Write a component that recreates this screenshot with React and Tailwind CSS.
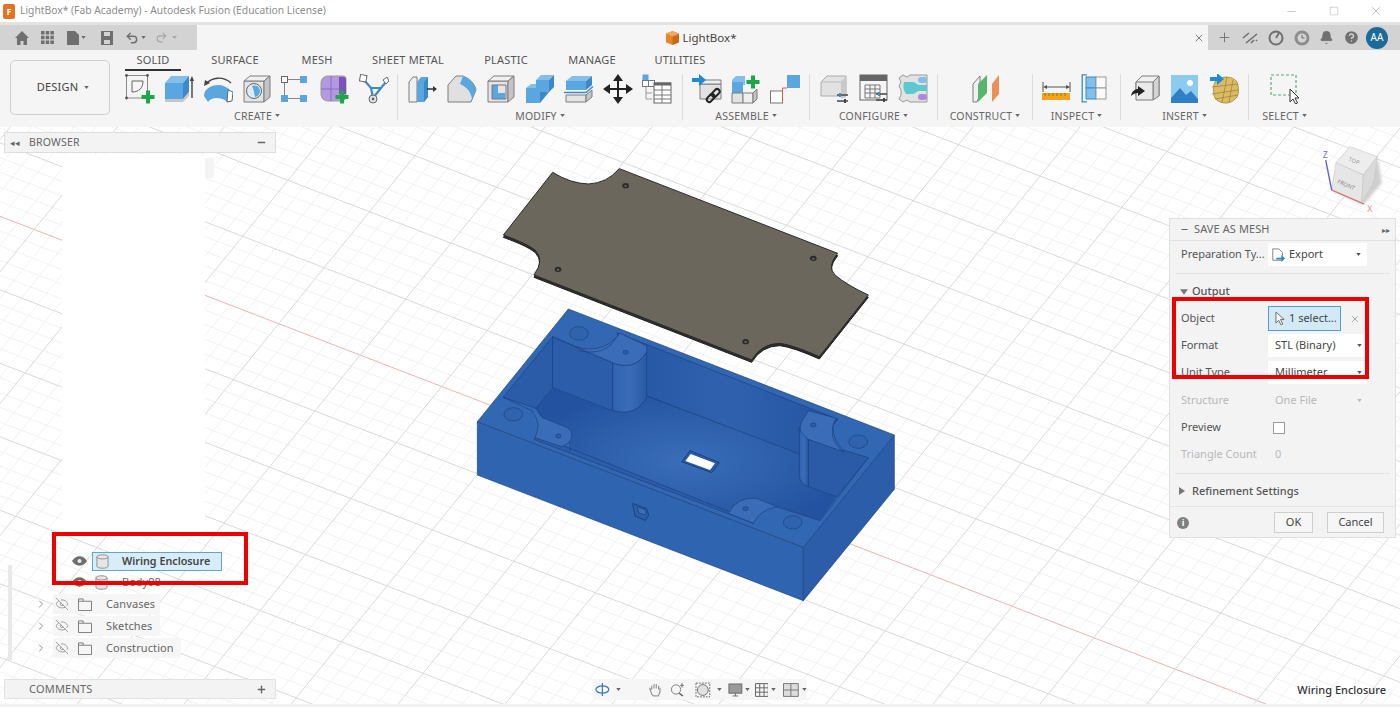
import { Undo2, Redo2, Plus, X, Minus, Square, ChevronRight, EyeOff, Bell, HelpCircle } from 'lucide-react';

const font = { fontFamily: '"Noto Sans", sans-serif' };

const Ico = ({ children }) => (
    <svg viewBox="0 0 30 30" className="h-[30px] w-[30px] shrink-0">{children}</svg>
);

const BLUE = '#5aa7e0';
const BLUE_D = '#3a89c9';
const BLUE_L = '#84bfea';
const EDGE = '#7d7d7d';
const GREEN = '#1ea64a';

const GreenPlus = ({ x = 23, y = 23 }) => (
    <path d={`M${x - 2} ${y - 6.5}h4v4.5h4.5v4h-4.5v4.5h-4v-4.5h-4.5v-4h4.5z`} fill={GREEN} />
);

const Sliders = ({ x = 18, y = 19 }) => (
    <g stroke="#444" strokeWidth="1.4">
        <path d={`M${x} ${y}h11M${x} ${y + 6}h11`} />
        <path d={`M${x + 3} ${y - 2}v4`} stroke={BLUE_D} strokeWidth="2" />
        <path d={`M${x + 8} ${y + 4}v4`} strokeWidth="2" />
    </g>
);

const BlueArrow = ({ x = 0, y = 0 }) => (
    <path d={`M${x} ${y + 3}h7v-4l7 6-7 6v-4h-7z`} fill="#1f8ad6" />
);

const Cube = ({ fill = '#e4e4e4', side = '#c4c4c4', top = '#f0f0f0' }) => (
    <g stroke={EDGE} strokeWidth="1" strokeLinejoin="round">
        <path d="M2 7h20v21H2z" fill={fill} />
        <path d="M2 7l6-5h20l-6 5z" fill={top} />
        <path d="M22 7l6-5v21l-6 5z" fill={side} />
    </g>
);

const createIcons = [
    <Ico key="sketch">
        <rect x="1.5" y="1.5" width="21" height="22.5" fill="none" stroke="#8a8a8a" />
        {[[1.5, 1.5], [22.5, 1.5], [1.5, 24], [22.5, 24]].map(([cx, cy]) => (
            <circle key={`${cx}${cy}`} cx={cx} cy={cy} r="1.4" fill="#555" />
        ))}
        <path d="M7 7h11M7 7v11M18 7c0 7-4 11-11 11" fill="none" stroke="#666" />
        <GreenPlus />
    </Ico>,
    <Ico key="extrude">
        <path d="M1 9h18v16H1z" fill={BLUE} />
        <path d="M1 9l6-7h18l-6 7z" fill={BLUE_L} />
        <path d="M19 9l6-7v16l-6 7z" fill={BLUE_D} />
        <path d="M1 25h18l6-7v4l-6 6H1z" fill="#c6c6c6" />
        <path d="M28 24V5" stroke="#444" strokeWidth="1.4" />
        <path d="M25.7 7L28 2l2 5z" fill="#444" />
    </Ico>,
    <Ico key="revolve">
        <path d="M1 22C1 15 8 11 15 11c5 0 9 2 12 5l-3 12c-3-3-6-4-10-4s-7 1-9 4z" fill={BLUE} />
        <path d="M25 16l5 2-1 9-5 1z" fill="#fff" stroke="#666" />
        <path d="M3 10C9 3 20 2 28 9" fill="none" stroke="#444" strokeWidth="1.3" />
        <path d="M1 12l1-6 5 3z" fill="#444" />
    </Ico>,
    <Ico key="hole">
        <Cube />
        <circle cx="12" cy="17" r="7.5" fill="#dcebf6" stroke="#666" />
        <path d="M10 12c5-2 8 2 8 5 0 3-3 6-5 6-1-4-1-8-3-11z" fill={BLUE} />
    </Ico>,
    <Ico key="pattern">
        <rect x="0.5" y="2.5" width="6" height="6" fill="#fff" stroke="#666" />
        <rect x="19" y="2" width="7" height="7" fill={BLUE} />
        <rect x="0" y="21" width="7" height="7" fill={BLUE} />
        <rect x="19" y="21" width="7" height="7" fill={BLUE} />
        <path d="M7 5.5h12M3.5 9v12M7 24.5h12" stroke="#888" />
    </Ico>,
    <Ico key="form">
        <path d="M1 9c0-4 3-7 7-7h15c2 0 3 1 3 3v17c0 3-2 5-5 5H8c-4 0-7-3-7-7z" fill="#b39ae0" stroke="#9a9a9a" />
        <path d="M1 15h20M11 2v25" stroke="#8a6fc0" />
        <path d="M19 3h4c2 0 3 1 3 3v14h-7z" fill="#7a52b8" />
        <GreenPlus x={22} y={23} />
    </Ico>,
    <Ico key="derive">
        <path d="M5 6l7 8h10l5-6M12 14l2 10M22 14l-8 10" fill="none" stroke={BLUE_D} strokeWidth="2.2" />
        <rect x="1" y="1" width="6.5" height="6.5" fill="#fff" stroke="#666" transform="rotate(10 4 4)" />
        <path d="M24 6l4-3 2 4-3 3z" fill="#fff" stroke="#666" />
        <circle cx="14" cy="25" r="4" fill="#e4e4e4" stroke="#666" />
        <circle cx="14" cy="25" r="1.4" fill="#666" />
    </Ico>,
];

const modifyIcons = [
    <Ico key="press">
        <path d="M1 28V8l4-5h4v25z" fill="#f0f0f0" stroke={EDGE} />
        <path d="M9 28V8l4-5h7v20l-4 5z" fill={BLUE} />
        <path d="M16 8l4-5v20l-4 5z" fill={BLUE_D} />
        <path d="M19 15h7" stroke="#333" strokeWidth="1.5" />
        <path d="M25 12l4 3-4 3z" fill="#333" />
    </Ico>,
    <Ico key="fillet">
        <path d="M1 28V11l8-9h7c7 3 12 8 13 14l-5 12z" fill="#e0e0e0" stroke={EDGE} />
        <path d="M16 2c7 2 12 8 13 14l-4 9c-1-7-5-12-12-15z" fill={BLUE} />
    </Ico>,
    <Ico key="shell">
        <Cube />
        <path d="M6 11h6v8h7v6H6z" fill={BLUE} />
        <path d="M6 11h14v14H6z" fill="none" stroke="#777" />
    </Ico>,
    <Ico key="combine">
        <path d="M1 14l5-4h12v8H1z" fill={BLUE_L} />
        <path d="M1 14h14v15H1z" fill={BLUE} />
        <path d="M11 6l5-5h13l-5 5z" fill={BLUE_L} />
        <path d="M11 6h13v12H11z" fill={BLUE} />
        <path d="M24 6l5-5v12l-5 5zM15 18h9l-9 11z" fill={BLUE_D} />
    </Ico>,
    <Ico key="split">
        <path d="M2 7l6-5h20l-6 5z" fill={BLUE_L} />
        <path d="M2 7h20v9H2z" fill={BLUE} />
        <path d="M22 7l6-5v9l-6 5z" fill={BLUE_D} />
        <path d="M0 18.5h22l7-6" fill="none" stroke={BLUE_D} strokeWidth="1.5" />
        <path d="M2 21h20v7H2z" fill="#e4e4e4" stroke={EDGE} />
        <path d="M22 21l6-5v7l-6 5z" fill="#c4c4c4" stroke={EDGE} />
    </Ico>,
    <Ico key="move">
        <path d="M15 3v24M3 15h24" stroke="#222" strokeWidth="2" />
        <path d="M15 0l5 7H10zM15 30l-5-7h10zM0 15l7-5v10zM30 15l-7 5V10z" fill="#222" />
    </Ico>,
    <Ico key="params">
        <rect x="0.5" y="0.5" width="6" height="6" fill={BLUE} />
        <rect x="0.5" y="6.5" width="6" height="6" fill="#fff" stroke="#777" />
        <rect x="6.5" y="6.5" width="6" height="6" fill="#fff" stroke="#777" />
        <path d="M4 13v12h6M4 19h6" stroke="#999" fill="none" />
        <rect x="12" y="9" width="17" height="20" fill="#fff" stroke="#666" />
        <path d="M12 10h17" stroke="#666" strokeWidth="3" />
        <path d="M12 16h17M12 21h17M12 25h17M20 11v18" stroke="#777" />
    </Ico>,
];

const assembleIcons = [
    <Ico key="joint">
        <path d="M8 10h21v15H8z" fill="#e2e2e2" stroke={EDGE} />
        <path d="M8 10l4-4h17v4z" fill="#f0f0f0" stroke={EDGE} />
        <BlueArrow x={0} y={1} />
        <g fill="none" stroke="#222" strokeWidth="2">
            <rect x="14" y="22" width="9" height="5" rx="2.5" transform="rotate(-45 18 24)" />
            <rect x="19" y="17" width="9" height="5" rx="2.5" transform="rotate(-45 23 19)" />
        </g>
    </Ico>,
    <Ico key="component">
        <path d="M1 6l4-4h9v9H1z" fill={BLUE_L} />
        <path d="M1 8h11v11H1z" fill={BLUE} />
        <path d="M1 19h11v10H1z" fill="#e2e2e2" stroke={EDGE} />
        <path d="M12 19h10v10H12z" fill="#efefef" stroke={EDGE} />
        <path d="M22 19l4-4v10l-4 4z" fill="#c4c4c4" stroke={EDGE} />
        <GreenPlus x={22} y={8} />
    </Ico>,
    <Ico key="built">
        <rect x="17" y="1" width="13" height="13" fill={BLUE} />
        <rect x="0.5" y="17" width="12" height="12" fill="#fff" stroke="#777" />
        <path d="M12.5 14v15M12.5 14H17" fill="none" stroke="#e05a4a" />
    </Ico>,
];

const configureIcons = [
    <Ico key="cfg">
        <path d="M1 8l6-6h19v20H1z" fill="#e2e2e2" stroke="#aaa" />
        <path d="M21 8l5-6v21l-5 2z" fill="#c8c8c8" />
        <path d="M1 8h20" stroke="#bbb" />
        <Sliders x={17} y={21} />
    </Ico>,
    <Ico key="cfgtable">
        <rect x="1" y="1" width="27" height="25" fill="#f6f6f6" stroke="#666" />
        <rect x="1" y="1" width="27" height="6" fill="#666" />
        <path d="M6 11h15v13H6zM6 15h15M6 19h15M11 11v13M16 11v13" fill="none" stroke="#777" />
        <Sliders x={17} y={20} />
    </Ico>,
    <Ico key="cfgflow">
        <path d="M1 4l4-3 4 2 3-2h17v27H12l-3-2-4 2-4-3 2-4v-5l-2-4 2-4z" fill="#e2e2e2" stroke="#999" />
        <path d="M6 8h9c3 0 3 3 7 3h7v6h-8c-3 0-3 3-7 3H8c-3-4-3-8-2-12z" fill="#5cc8d0" />
        <rect x="20" y="3" width="9" height="6" rx="3" fill={BLUE_L} />
        <rect x="20" y="20" width="9" height="6" rx="3" fill="#a98bdc" />
    </Ico>,
];

const constructIcons = [
    <Ico key="planes">
        <path d="M3 28V10l7-8v18l-3 8z" fill="#f0f0f0" stroke={EDGE} />
        <path d="M8 28V10l9-9v18z" fill="#58b56e" />
        <path d="M22 28V10l7-9v19z" fill="#e89058" />
    </Ico>,
];

const inspectIcons = [
    <Ico key="measure">
        <path d="M1 8v10M28 8v10M3 13h24" stroke="#555" />
        <path d="M1 13l4-2v4zM28 13l-4-2v4z" fill="#555" />
        <rect x="0" y="19" width="28" height="7" fill="#f2a31f" />
        <path d="M3 19v3M7 19v3M11 19v3M15 19v3M19 19v3M23 19v3" stroke="#a86e08" />
    </Ico>,
    <Ico key="section">
        <rect x="5" y="3" width="10" height="11" fill={BLUE_L} stroke={BLUE_D} />
        <rect x="5" y="14" width="10" height="11" fill={BLUE_L} stroke={BLUE_D} />
        <rect x="15" y="3" width="10" height="11" fill="#fafafa" stroke="#999" />
        <rect x="15" y="14" width="10" height="11" fill="#fafafa" stroke="#999" />
        <path d="M6 0.8H1.2v27H6" fill="none" stroke={BLUE_D} strokeWidth="1.3" />
    </Ico>,
];

const insertIcons = [
    <Ico key="derivein">
        <path d="M5 8l6-6h17v20H5z" fill="#f0f0f0" stroke={EDGE} />
        <path d="M22 8l6-6v20l-6 4z" fill="#d4d4d4" stroke={EDGE} />
        <path d="M5 26V8h17v18z" fill="#eaeaea" stroke={EDGE} />
        <path d="M0 22c1-5 4-7 7-7v-3l7 5-7 5v-3c-3 0-5 1-7 3z" fill="#222" />
    </Ico>,
    <Ico key="canvas">
        <rect x="1" y="1" width="27" height="28" fill="#8ccbf0" />
        <circle cx="20" cy="9" r="3" fill="#fff" />
        <path d="M1 24l9-10 6 7 5-4 7 8v4H1z" fill="#2f80c4" />
    </Ico>,
    <Ico key="mesh">
        <path d="M6 8c3-3 7-5 11-5 5 0 9 2 11 5 2 4 2 12 0 15-3 4-7 6-11 6-5 0-9-2-11-5-2-5-2-12 0-16z" fill="#dcbb68" stroke="#b4953f" />
        <path d="M3 13l26-3M3 20l26-4M6 25l23-4M18 3l-5 26M24 6l-4 22" fill="none" stroke="#a3852f" strokeWidth="0.8" />
        <BlueArrow x={1} y={0} />
    </Ico>,
];

const selectIcons = [
    <Ico key="select">
        <rect x="1" y="1" width="25" height="20" fill="none" stroke="#55b07a" strokeWidth="1.2" strokeDasharray="3 2" />
        <path d="M20 15v13l3-3 2.5 5 2-1-2.5-5h4z" fill="#fff" stroke="#333" strokeWidth="1" />
    </Ico>,
];

const tabs = [
    ['SOLID', 'w-[56px]'],
    ['SURFACE', 'w-[108px]'],
    ['MESH', 'w-[56px]'],
    ['SHEET METAL', 'w-[126px]'],
    ['PLASTIC', 'w-[70px]'],
    ['MANAGE', 'w-[102px]'],
    ['UTILITIES', 'w-[74px]'],
];

const groups = [
    { label: 'CREATE', width: 'w-[281px]', icons: createIcons },
    { label: 'MODIFY', width: 'w-[285px]', icons: modifyIcons },
    { label: 'ASSEMBLE', width: 'w-[127px]', icons: assembleIcons },
    { label: 'CONFIGURE', width: 'w-[128px]', icons: configureIcons },
    { label: 'CONSTRUCT', width: 'w-[95px]', icons: constructIcons },
    { label: 'INSPECT', width: 'w-[88px]', icons: inspectIcons },
    { label: 'INSERT', width: 'w-[128px]', icons: insertIcons },
    { label: 'SELECT', width: 'w-[71px]', icons: selectIcons, last: true },
];

const Caret = ({ className = '' }) => (
    <svg viewBox="0 0 6 4" className={`h-[3px] w-[5px] ${className}`}>
        <path d="M0 0h6L3 4z" fill="currentColor" />
    </svg>
);

function QuickBar() {
    return (
        <div className="flex h-[25px] w-[197px] items-center bg-[#d3d3d3] text-[#6f6f6f]">
            <svg viewBox="0 0 14 14" className="ml-[15px] h-[14px] w-[14px]">
                <path d="M7 0l7 7h-2v7H8.500v-4h-3v4H2V7H0z" fill="currentColor" />
            </svg>
            <svg viewBox="0 0 13 13" className="ml-[12px] h-[13px] w-[13px]">
                <path d="M0 0h3.500v3.500H0zM4.700 0h3.500v3.500H4.700zM9.400 0h3.500v3.500H9.400zM0 4.700h3.500v3.500H0zM4.700 4.700h3.500v3.500H4.700zM9.400 4.700h3.500v3.500H9.400zM0 9.400h3.500v3.500H0zM4.700 9.400h3.500v3.500H4.700zM9.400 9.400h3.500v3.500H9.400z" fill="currentColor" />
            </svg>
            <svg viewBox="0 0 12 14" className="ml-[13px] h-[14px] w-[12px]">
                <path d="M0 0h8l4 4v10H0z" fill="currentColor" />
            </svg>
            <Caret className="ml-[2px]" />
            <svg viewBox="0 0 12 14" className="ml-[15px] h-[14px] w-[12px]">
                <path d="M0 0h12v14H0zM3 1v4h6V1zM3 9v4h6V9z" fill="currentColor" fillRule="evenodd" />
            </svg>
            <Undo2 size={14} strokeWidth={2.5} className="ml-[12px]" />
            <Caret className="ml-[2px]" />
            <Redo2 size={13} strokeWidth={2} className="ml-[9px] text-[#a5a5a5]" />
            <Caret className="ml-[4px] text-[#a5a5a5]" />
        </div>
    );
}

function RightIcons() {
    return (
        <div className="flex h-[25px] flex-1 items-center bg-[#d3d3d3] pl-[9px] text-[#707070]">
            <Plus size={15} strokeWidth={1.5} />
            <svg viewBox="0 0 16 14" className="ml-[10px] h-[14px] w-[16px]">
                <path d="M1 7l6-5M4 12l11-9M9 12l3-3M14 10l1-1" stroke="currentColor" strokeWidth="1.6" fill="none" />
            </svg>
            <svg viewBox="0 0 16 16" className="ml-[10px] h-[16px] w-[16px]">
                <circle cx="8" cy="8" r="6.500" fill="none" stroke="currentColor" strokeWidth="2" />
                <path d="M8 8l3-5" stroke="currentColor" strokeWidth="1.800" />
            </svg>
            <svg viewBox="0 0 16 16" className="ml-[10px] h-[16px] w-[16px]">
                <circle cx="8" cy="8" r="7.500" fill="#8d8d8d" />
                <circle cx="8" cy="8" r="4.500" fill="#d3d3d3" />
                <path d="M8 5v3h2.500" stroke="#666" fill="none" />
            </svg>
            <Bell size={15} fill="currentColor" strokeWidth={1} className="ml-[9px]" />
            <HelpCircle size={17} fill="currentColor" stroke="#d3d3d3" strokeWidth={2} className="ml-[9px]" />
            <div className="ml-[6px] flex h-[22px] w-[22px] items-center justify-center rounded-full bg-[#1b6a97] text-[10px] text-white">AA</div>
        </div>
    );
}

function Toolbar() {
    return (
        <div className="flex h-[77px] shrink-0 bg-[#f5f5f5] pl-[10px]">
            <div className="mt-[10px] flex h-[55px] w-[100px] items-center justify-center gap-[6px] rounded-[5px] border border-[#d0d0d0] bg-[#f5f5f5] pl-[6px] text-[11px] tracking-[0.2px] text-[#444]">
                DESIGN <Caret className="text-[#666]" />
            </div>
            <div className="ml-[7px] flex flex-col">
                <div className="ml-[8px] flex h-[20px] items-end text-[11px] tracking-[0.2px] text-[#555]">
                    {tabs.map(([name, width], i) => (
                        <div key={name} className={`${width} relative h-[20px] text-center leading-[20px]`}>
                            {name}
                            {i === 0 && <div className="absolute inset-x-0 -bottom-[1px] h-[2px] bg-[#333]" />}
                        </div>
                    ))}
                </div>
                <div className="mt-[4px] flex">
                    {groups.map(g => (
                        <div key={g.label} className={`${g.width} flex h-[46px] flex-col items-center ${g.last ? '' : 'border-r border-[#dcdcdc]'}`}>
                            <div className="flex gap-[9px]">{g.icons}</div>
                            <div className="mt-[6px] flex items-center gap-[3px] text-[10.500px] leading-[13px] tracking-[0.2px] text-[#666]">
                                {g.label} <Caret className="mb-[3px] text-[#666]" />
                            </div>
                        </div>
                    ))}
                </div>
            </div>
        </div>
    );
}

// grid lattice measured off the reference, origin sits on the red axis
const O = [278.7, 323.7];
const U = [81.5, 31.4];
const V = [45.4, -56];

function GridLines() {
    const lines = [];
    for (let j = -60; j <= 60; j++) {
        const ox = O[0] + (V[0] * j) / 5;
        const oy = O[1] + (V[1] * j) / 5;
        lines.push({ key: `a${j}`, x1: ox - U[0] * 30, y1: oy - U[1] * 30, x2: ox + U[0] * 30, y2: oy + U[1] * 30, major: j % 5 === 0, red: j === 0 });
    }
    for (let i = -80; i <= 120; i++) {
        const ox = O[0] + (U[0] * i) / 5;
        const oy = O[1] + (U[1] * i) / 5;
        lines.push({ key: `b${i}`, x1: ox - V[0] * 30, y1: oy - V[1] * 30, x2: ox + V[0] * 30, y2: oy + V[1] * 30, major: i % 5 === 0 });
    }
    const sorted = [...lines].sort((a, b) => Number(a.major) - Number(b.major));
    return sorted.map(({ key, major, red, ...l }) => (
        <line key={key} {...l} stroke={red ? '#f1b2b2' : major ? '#d9d9d9' : '#f2f2f2'} strokeWidth="1" />
    ));
}

const LINE = '#1c3f7c';

function Model() {
    const plate = 'M278 37Q330 70 385 72Q440 70 478 26L1133 280Q1100 320 1125 345Q1160 375 1225 405L1078 590Q1000 555 960 550Q905 550 875 600L222 345Q255 300 225 270Q200 250 130 225Z';
    return (
        <g transform="translate(460 160) scale(0.33333)">
            <defs>
                <radialGradient id="floor" cx="0.5" cy="0.55" r="0.55">
                    <stop offset="0" stopColor="#3a6eb9" />
                    <stop offset="1" stopColor="#2353a0" />
                </radialGradient>
                <linearGradient id="back" x1="0" y1="0" x2="1" y2="0">
                    <stop offset="0" stopColor="#2556a3" />
                    <stop offset="0.5" stopColor="#2f61ae" />
                    <stop offset="1" stopColor="#2454a0" />
                </linearGradient>
                <linearGradient id="round" x1="0" y1="0" x2="1" y2="0">
                    <stop offset="0" stopColor="#2f63b0" />
                    <stop offset="0.5" stopColor="#3a6cb8" />
                    <stop offset="1" stopColor="#2859a5" />
                </linearGradient>
            </defs>

            {/* lid plate */}
            <path d={plate} transform="translate(0 7)" fill="#2c2c2c" stroke="#1e1e1e" strokeWidth="3" />
            <path d={plate} fill="#6b675c" stroke="#2a2a2a" strokeWidth="3" />
            {[[497, 77], [1060, 295], [857, 545], [294, 328]].map(([cx, cy]) => (
                <g key={cx}>
                    <ellipse cx={cx} cy={cy} rx="10" ry="8" fill="#2a2a28" />
                    <ellipse cx={cx} cy={cy + 1} rx="4" ry="3" fill="#6b675c" />
                </g>
            ))}

            {/* box body */}
            <g stroke={LINE} strokeWidth="2" strokeLinejoin="round">
                <path d="M52 785L1030 1162V1322L52 945Z" fill="#2f65b0" />
                <path d="M1030 1162L1303 825V988L1030 1322Z" fill="#2c5da8" />
                <path d="M325 447L1303 825L1030 1162L52 785Z" fill="#3268b3" />

                {/* cavity walls and floor */}
                <path d="M470 518L1135 778L1020 885L560 708Z" fill="url(#back)" />
                <path d="M228 745L278 683L458 752L560 708L1020 880L1045 980L1130 1010L1080 1082L950 1040L890 1015L830 1030L805 1056L330 872L335 830L245 772Z" fill="url(#floor)" stroke="none" />
                <path d="M130 712L278 530V683L228 745Z" fill="#2b5ca8" />
                <path d="M560 708L1020 882" fill="none" />
                <path d="M228 745L245 772" fill="none" />
                <path d="M1225 893L1080 1082L950 1040" fill="none" />

                {/* thin front lip */}
                <path d="M232 826L805 1054L880 1090L222 838Z" fill="#2c5da8" />
                <path d="M330 832V874" fill="none" />

                {/* north pillar */}
                <path d="M278 530L458 608V752L278 683Z" fill="#2c5dab" />
                <path d="M458 608Q525 635 560 575V712Q530 770 458 752Z" fill="url(#round)" />
                <path d="M345 560Q430 585 480 520L560 557V575Q525 635 458 608Z" fill="#3a6cb8" />
                <path d="M278 530L345 560" fill="none" />
                <path d="M355 572Q440 590 470 530" fill="none" />

                {/* west tab */}
                <path d="M215 752Q248 790 225 833L305 860Q335 850 335 825Q335 810 320 802L245 772" fill="#3a6cb8" />
                <path d="M130 712L215 752" fill="none" />

                {/* east pillar */}
                <path d="M1045 838L1225 893L1130 1010L1045 980Z" fill="#2b5ba7" />
                <path d="M1018 800V950Q1020 970 1045 980V838Z" fill="url(#round)" />
                <path d="M1045 752L1130 775Q1100 810 1150 875L1045 838Q1010 815 1025 785Z" fill="#3a6cb8" />
                <path d="M1130 775Q1095 830 1152 878" fill="none" />

                {/* south tab */}
                <path d="M805 1060Q830 1010 890 1015L950 1040Q900 1050 880 1090Z" fill="#3a6cb8" />

                {/* screw holes */}
                {[[357, 520], [160, 763], [1195, 845], [998, 1087]].map(([cx, cy]) => (
                    <ellipse key={cx} cx={cx} cy={cy} rx="28" ry="20" fill="#3063ad" />
                ))}
                {[[497, 577], [295, 828], [1060, 795], [857, 1046]].map(([cx, cy]) => (
                    <ellipse key={cx} cx={cx} cy={cy} rx="8" ry="6" fill="#2c5da8" />
                ))}

                {/* slot and connector */}
                <path d="M665 905L690 872L778 908L755 938Z" fill="#2a5aa6" strokeWidth="3" />
                <path d="M676 903L692 882L765 910L750 930Z" fill="#fff" stroke="none" />
                <path d="M518 1030L560 1046L566 1066L556 1081L525 1068Z" fill="#2c5da8" strokeWidth="3" />
                <path d="M532 1040L556 1050L558 1066L536 1058Z" fill="#3c6fba" />
            </g>
        </g>
    );
}

function NavCube() {
    return (
        <g transform="translate(1160 140) scale(0.33333)">
            <defs>
                <filter id="soft"><feGaussianBlur stdDeviation="5" /></filter>
            </defs>
            <path d="M520 155L610 195L665 130L655 60Z" fill="#cfcfcf" filter="url(#soft)" />
            <path d="M528 68L570 20L652 50L610 105Z" fill="#ededed" stroke="#c8c8c8" strokeWidth="2" />
            <path d="M528 68L610 105L605 188L515 150Z" fill="#e6e6e6" stroke="#c8c8c8" strokeWidth="2" />
            <path d="M610 105L652 50L640 130L605 188Z" fill="#dadada" stroke="#c8c8c8" strokeWidth="2" />
            <text x="580" y="68" fontSize="17" fill="#999" transform="rotate(22 580 68)" textAnchor="middle" style={font}>TOP</text>
            <text x="556" y="140" fontSize="17" fill="#888" transform="rotate(24 556 140)" textAnchor="middle" style={font}>FRONT</text>
            <path d="M497 60L515 150" stroke="#5b5fd0" strokeWidth="4" />
            <path d="M515 150L612 192" stroke="#d96a6a" strokeWidth="4" />
            <text x="488" y="55" fontSize="26" fill="#6a6fe0" style={font}>Z</text>
            <text x="622" y="215" fontSize="26" fill="#e58a8a" style={font}>X</text>
        </g>
    );
}

const EyeSolid = () => (
    <svg viewBox="0 0 16 10" className="h-[10px] w-[15px] shrink-0">
        <path d="M0 5c2-3 5-5 8-5s6 2 8 5c-2 3-5 5-8 5S2 8 0 5z" fill="#6e6e6e" />
        <circle cx="8" cy="5" r="2.200" fill="#e8e8e8" />
    </svg>
);

const Cylinder = () => (
    <svg viewBox="0 0 14 16" className="h-[15px] w-[13px] shrink-0">
        <path d="M1 3c0-3 12-3 12 0v10c0 3-12 3-12 0z" fill="#e6e6e6" stroke="#8a8a8a" />
        <path d="M1 3c0 3 12 3 12 0" fill="none" stroke="#8a8a8a" />
    </svg>
);

const FolderIcon = () => (
    <svg viewBox="0 0 15 14" className="h-[13px] w-[14px] shrink-0">
        <path d="M.5 1h5v2.500h9v10H.5zM.5 3.500h5" fill="none" stroke="#777" />
    </svg>
);

function TreeFolder({ name, width }) {
    return (
        <div className="flex h-[22px] items-center">
            <ChevronRight size={12} strokeWidth={1.5} className="ml-[35px] shrink-0 text-[#666]" />
            <div className={`${width} ml-[6px] flex h-[20px] items-center rounded-[2px] bg-[#f6f6f6]`}>
                <EyeOff size={14} strokeWidth={1.3} className="ml-[2px] shrink-0 text-[#8a8a8a]" />
                <div className="ml-[9px]"><FolderIcon /></div>
                <span className="ml-[14px] text-[11px] tracking-[0.1px] text-[#666]">{name}</span>
            </div>
        </div>
    );
}

function Browser() {
    return (
        <>
            <div className="absolute left-[4px] top-[5px] flex h-[21px] w-[272px] items-center border border-[#dedede] bg-[#f3f3f3] text-[#666]">
                <span className="ml-[5px] w-[19px] text-[9px] leading-none">◂◂</span>
                <span className="text-[10.500px] tracking-[0.2px]">BROWSER</span>
                <Minus size={11} strokeWidth={3} className="ml-auto mr-[8px]" />
            </div>
            <div className="absolute left-[62px] top-[27px] h-[378px] w-[143px] bg-white" />
            <div className="absolute left-[205px] top-[31px] h-[20px] w-[9px] bg-[#f4f4f4]" />
            <div className="absolute left-[8px] top-[438px] h-[95px] w-[4px] bg-[#e9e9e9]" />

            <div className="absolute left-0 top-[424px] w-[276px]">
                <div className="flex h-[20px] items-center">
                    <div className="ml-[72px]"><EyeSolid /></div>
                    <div className="ml-[5px] flex h-[19px] w-[130px] items-center border border-[#58a9cc] bg-[#d9edf8]">
                        <div className="ml-[3px]"><Cylinder /></div>
                        <span className="ml-[13px] text-[10.750px] font-semibold text-[#444]">Wiring Enclosure</span>
                    </div>
                </div>
                <div className="flex h-[22px] items-center">
                    <div className="ml-[72px]"><EyeSolid /></div>
                    <div className="ml-[8px]"><Cylinder /></div>
                    <span className="ml-[14px] text-[11px] text-[#666]">Body98</span>
                </div>
                <TreeFolder name="Canvases" width="w-[107px]" />
                <TreeFolder name="Sketches" width="w-[107px]" />
                <TreeFolder name="Construction" width="w-[128px]" />
            </div>

            <div className="absolute left-[4px] top-[552px] flex h-[20px] w-[272px] items-center border border-[#e2e2e2] bg-[#f3f3f3] text-[#666]">
                <span className="ml-[24px] text-[11px] tracking-[0.2px]">COMMENTS</span>
                <Plus size={11} strokeWidth={3} className="ml-auto mr-[8px]" />
            </div>
            <div className="absolute left-[52px] top-[405px] h-[53px] w-[196px] border-[4px] border-[#ee0000]" />
        </>
    );
}

const Field = ({ children, disabled = false }) => (
    <div className={`flex h-[23px] w-[99px] items-center pl-[7px] pr-[5px] text-[11px] ${disabled ? 'text-[#b8b8b8]' : 'bg-white text-[#444]'}`}>
        {children}
        <Caret className={`ml-auto ${disabled ? 'text-[#b8b8b8]' : 'text-[#555]'}`} />
    </div>
);

const Row = ({ label, disabled = false, children }) => (
    <div className="flex h-[27px] items-center pl-[11px]">
        <span className={`w-[87px] shrink-0 text-[11px] ${disabled ? 'text-[#b8b8b8]' : 'text-[#555]'}`}>{label}</span>
        {children}
    </div>
);

function SavePanel() {
    return (
        <div className="absolute left-[1169px] top-[91px] h-[320px] w-[227px] border border-[#e0e0e0] bg-[#f3f3f3]">
            <div className="flex h-[22px] items-center border-b border-[#e2e2e2] pl-[10px] text-[#666]">
                <Minus size={9} strokeWidth={3} />
                <span className="ml-[5px] text-[11px] tracking-[0.1px]">SAVE AS MESH</span>
                <span className="ml-auto mr-[5px] text-[8px]">▸▸</span>
            </div>
            <Row label="Preparation Ty...">
                <div className="flex h-[23px] w-[99px] items-center bg-white pl-[3px] pr-[6px] text-[11px] text-[#444]">
                    <svg viewBox="0 0 16 16" className="h-[14px] w-[14px]">
                        <path d="M2 1h7l4 4v9H2z" fill="#fff" stroke="#777" />
                        <path d="M6 11h6V8l4 4-4 4v-3H6z" fill="#1f8ad6" />
                    </svg>
                    <span className="ml-[4px]">Export</span>
                    <Caret className="ml-auto text-[#555]" />
                </div>
            </Row>
            <div className="mx-[5px] mt-[5px] border-t border-[#e4e4e4]" />
            <div className="flex h-[31px] items-center pb-[4px] pl-[10px] pt-[8px] text-[11px] font-medium text-[#555]">
                <Caret className="!h-[6px] !w-[8px] text-[#777]" />
                <span className="ml-[4px]">Output</span>
            </div>
            <Row label="Object">
                <div className="flex h-[25px] w-[73px] items-center border border-[#4f9fca] bg-[#d3e9f5] pl-[6px] text-[11px] text-[#444]">
                    <svg viewBox="0 0 12 16" className="h-[15px] w-[11px] shrink-0">
                        <path d="M1 1v12l3-3 2.500 5 2-1L6 9h4z" fill="#f6f6f6" stroke="#666" />
                    </svg>
                    <span className="ml-[3px]">1 select...</span>
                </div>
                <X size={10} strokeWidth={1.5} className="ml-[9px] text-[#777]" />
            </Row>
            <Row label="Format"><Field>STL (Binary)</Field></Row>
            <Row label="Unit Type"><Field>Millimeter</Field></Row>
            <div className="h-[1px]" />
            <Row label="Structure" disabled><Field disabled>One File</Field></Row>
            <Row label="Preview">
                <div className="ml-[5px] h-[12px] w-[12px] border border-[#999] bg-white" />
            </Row>
            <Row label="Triangle Count" disabled>
                <span className="ml-[7px] text-[11px] text-[#b8b8b8]">0</span>
            </Row>
            <div className="mx-[5px] mt-[5px] border-t border-[#e4e4e4]" />
            <div className="flex h-[32px] items-center pl-[9px] pt-[2px] text-[11px] font-medium text-[#555]">
                <svg viewBox="0 0 6 8" className="h-[8px] w-[6px]"><path d="M0 0l6 4-6 4z" fill="#777" /></svg>
                <span className="ml-[7px]">Refinement Settings</span>
            </div>
            <div className="flex h-[32px] items-center border-t border-[#e4e4e4] pl-[7px] pr-[11px]">
                <div className="flex h-[12px] w-[12px] items-center justify-center rounded-full bg-[#808080] text-[9px] font-bold leading-none text-white">i</div>
                <button className="ml-auto h-[21px] w-[39px] border border-[#cfcfcf] bg-[#f6f6f6] text-[11px] text-[#444]">OK</button>
                <button className="ml-[14px] h-[21px] w-[57px] border border-[#cfcfcf] bg-[#f6f6f6] text-[11px] text-[#444]">Cancel</button>
            </div>
            <div className="absolute left-[2px] top-[78px] h-[82px] w-[197px] border-[4px] border-[#ee0000]" />
        </div>
    );
}

function NavBar() {
    return (
        <div className="absolute left-[593px] top-[552px] flex h-[21px] w-[214px] items-center bg-[#f6f6f6] pl-[2px] text-[#666]">
            <svg viewBox="0 0 16 16" className="h-[15px] w-[15px]">
                <ellipse cx="8" cy="8" rx="7" ry="4" fill="none" stroke="#3a78b8" strokeWidth="1.300" />
                <path d="M8 1v14" stroke="#3a78b8" strokeWidth="1.300" />
            </svg>
            <Caret className="ml-[6px]" />
            <svg viewBox="0 0 16 16" className="ml-[27px] h-[15px] w-[15px]">
                <path d="M4 8V4M6.500 7V2M9 7V2M11.500 8V4M4 8l-2-1 2 6 2 2h5l2-4V6" fill="none" stroke="#999" strokeWidth="1.300" />
            </svg>
            <svg viewBox="0 0 16 16" className="ml-[8px] h-[15px] w-[15px]">
                <circle cx="6.500" cy="8" r="5" fill="none" stroke="#777" />
                <path d="M10 12l4 3" stroke="#555" strokeWidth="1.500" />
                <path d="M13 1v5M11 3.500h4" stroke="#666" />
            </svg>
            <svg viewBox="0 0 16 16" className="ml-[10px] h-[16px] w-[16px]">
                <rect x="1" y="1" width="14" height="14" fill="none" stroke="#777" strokeDasharray="2 1" />
                <circle cx="8" cy="8" r="5.500" fill="#e0e0e0" stroke="#777" />
            </svg>
            <Caret className="ml-[6px]" />
            <svg viewBox="0 0 16 16" className="ml-[6px] h-[15px] w-[15px]">
                <rect x="1" y="2" width="14" height="10" fill="#9a9a9a" stroke="#666" />
                <path d="M5 15h6M8 12v3" stroke="#666" />
            </svg>
            <Caret className="ml-[2px]" />
            <svg viewBox="0 0 14 14" className="ml-[5px] h-[14px] w-[14px]">
                <path d="M.5.500h13v13H.500zM4.800.500v13M9.200.500v13M.500 4.800h13M.500 9.200h13" fill="none" stroke="#666" />
            </svg>
            <Caret className="ml-[3px]" />
            <svg viewBox="0 0 16 14" className="ml-[7px] h-[14px] w-[16px]">
                <path d="M.5.500h15v13H.500zM8 .500v13M.500 7h15" fill="#ddd" stroke="#777" />
            </svg>
            <Caret className="ml-[3px]" />
        </div>
    );
}

export default function App() {
    return (
        <div className="flex h-[707px] w-[1400px] flex-col overflow-hidden bg-white" style={font}>
            {/* window title */}
            <div className="flex h-[22px] shrink-0 items-center bg-white pl-[3px]">
                <div className="flex h-[15px] w-[12px] items-center justify-center rounded-[2px] bg-[#e2731f] text-[9px] font-bold leading-none text-white">F</div>
                <span className="ml-[5px] text-[10.300px] text-[#8c8c8c]">LightBox* (Fab Academy) - Autodesk Fusion (Education License)</span>
                <Minus size={13} strokeWidth={1} className="ml-auto text-[#999]" />
                <Square size={10} strokeWidth={1} className="ml-[31px] text-[#999]" />
                <X size={14} strokeWidth={1} className="ml-[30px] mr-[17px] text-[#999]" />
            </div>
            <div className="h-[3px] shrink-0 bg-[#e3e3e3]" />

            {/* document tabs */}
            <div className="flex h-[25px] shrink-0">
                <QuickBar />
                <div className="relative flex w-[1011px] items-center justify-center rounded-tl-[4px] bg-[#f5f5f5] pr-[3px]">
                    <svg viewBox="0 0 14 15" className="mr-[4px] h-[14px] w-[13px]">
                        <path d="M7 0l7 3v9l-7 3-7-3V3z" fill="#e8832a" />
                        <path d="M7 6l7-3v9l-7 3z" fill="#c96a18" />
                        <path d="M0 3l7-3 7 3-7 3z" fill="#f3a45c" />
                    </svg>
                    <span className="text-[11.500px] text-[#444]">LightBox*</span>
                    <X size={12} strokeWidth={1.5} className="absolute right-[3px] text-[#555]" />
                </div>
                <RightIcons />
            </div>

            <Toolbar />

            {/* viewport */}
            <div className="relative flex-1 bg-white">
                <svg viewBox="0 127 1400 580" className="absolute inset-0 h-full w-full">
                    <GridLines />
                    <Model />
                    <NavCube />
                </svg>
                <Browser />
                <SavePanel />
                <NavBar />
                <span className="absolute bottom-[9px] right-[14px] text-[11px] font-medium text-[#333]">Wiring Enclosure</span>
                <div className="absolute inset-x-0 bottom-0 h-[3px] bg-[#f2f2f2]" />
            </div>
        </div>
    );
}
